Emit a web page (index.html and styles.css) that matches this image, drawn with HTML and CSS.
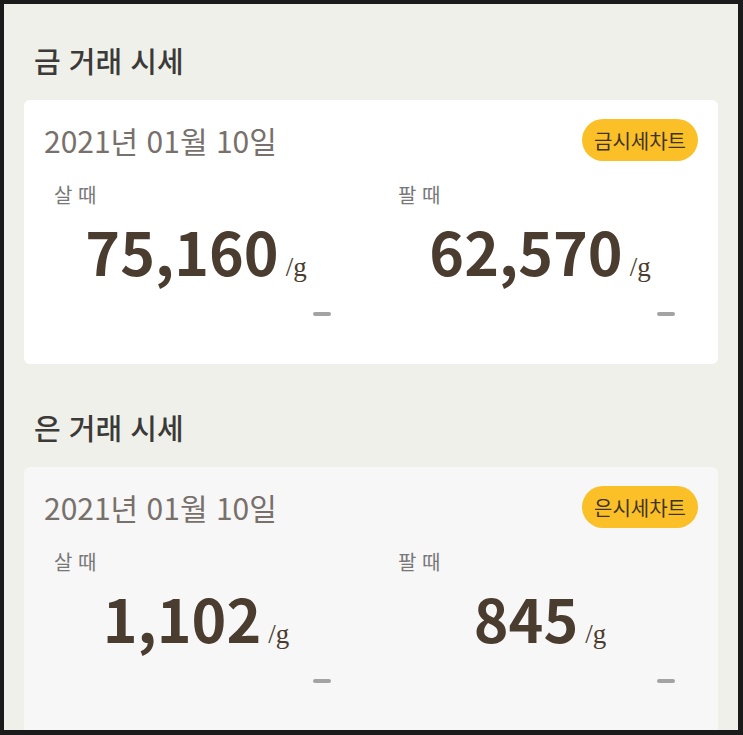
FILE: index.html
```html
<!DOCTYPE html>
<html lang="ko">
<head>
    <meta charset="UTF-8">
    <meta name="viewport" content="width=device-width, initial-scale=1.0">
    <title>금 은 거래 시세</title>
    <link rel="stylesheet" href="styles.css">
</head>
<body>
    <div class="screen">
        <section class="market">
            <h2 class="market-title">금 거래 시세</h2>
            <div class="price-card">
                <div class="price-head">
                    <span class="price-date">2021년 01월 10일</span>
                    <button class="chart-button">금시세차트</button>
                </div>
                <div class="price-grid">
                    <div class="price-item">
                        <span class="price-label">살 때</span>
                        <div class="price-value"><span class="price-number">75,160</span><span class="price-unit">/g</span></div>
                        <span class="price-change"></span>
                    </div>
                    <div class="price-item">
                        <span class="price-label">팔 때</span>
                        <div class="price-value"><span class="price-number">62,570</span><span class="price-unit">/g</span></div>
                        <span class="price-change"></span>
                    </div>
                </div>
            </div>
        </section>

        <section class="market">
            <h2 class="market-title">은 거래 시세</h2>
            <div class="price-card price-card-dim">
                <div class="price-head">
                    <span class="price-date">2021년 01월 10일</span>
                    <button class="chart-button">은시세차트</button>
                </div>
                <div class="price-grid">
                    <div class="price-item">
                        <span class="price-label">살 때</span>
                        <div class="price-value"><span class="price-number">1,102</span><span class="price-unit">/g</span></div>
                        <span class="price-change"></span>
                    </div>
                    <div class="price-item">
                        <span class="price-label">팔 때</span>
                        <div class="price-value"><span class="price-number">845</span><span class="price-unit">/g</span></div>
                        <span class="price-change"></span>
                    </div>
                </div>
            </div>
        </section>
    </div>
</body>
</html>
```

FILE: styles.css
```css
html, body {
    margin: 0;
    height: 100%;
}
body {
    background-color: #1b1b1b;
    padding: 4px 5px 5px 4px;
    box-sizing: border-box;
    font-family: "Noto Sans CJK KR", "Noto Sans", sans-serif;
}
.screen {
    height: 726px;
    overflow: hidden;
    background-color: #f0f0eb;
    padding: 0 20px;
}
.market {
    padding-top: 37px;
}
.market + .market {
    padding-top: 44px;
}
.market-title {
    margin: 0 0 21px;
    padding: 0 10px;
    font-size: 29px;
    line-height: 38px;
    font-weight: 500;
    color: #3b3a38;
}
.price-card {
    background-color: #ffffff;
    border-radius: 6px;
    padding: 19px 20px 48px;
}
.price-card-dim {
    background-color: #f7f7f7;
    padding-bottom: 70px;
}
.price-head {
    display: flex;
    justify-content: space-between;
    align-items: center;
    height: 42px;
}
.price-date {
    font-size: 30px;
    color: #78706b;
}
.chart-button {
    height: 42px;
    padding: 0 12px;
    border: none;
    border-radius: 21px;
    background-color: #fbbf28;
    color: #3e3422;
    font-family: inherit;
    font-size: 20px;
}
.price-grid {
    display: grid;
    grid-template-columns: 284px 284px;
    column-gap: 60px;
    padding: 21px 0 0 10px;
}
.price-item {
    display: flex;
    flex-direction: column;
}
.price-label {
    font-size: 20px;
    line-height: 25px;
    color: #777777;
}
.price-value {
    display: flex;
    justify-content: center;
    align-items: baseline;
    gap: 7px;
    margin-top: 13px;
    color: #4b3c30;
}
.price-number {
    font-size: 59px;
    line-height: 62px;
    font-weight: 700;
}
.price-unit {
    font-family: "Liberation Serif", serif;
    font-size: 27px;
}
.price-change {
    align-self: flex-end;
    width: 18px;
    height: 4px;
    margin: 29px 7px 0 0;
    border-radius: 2px;
    background-color: #a3a3a3;
}
```
